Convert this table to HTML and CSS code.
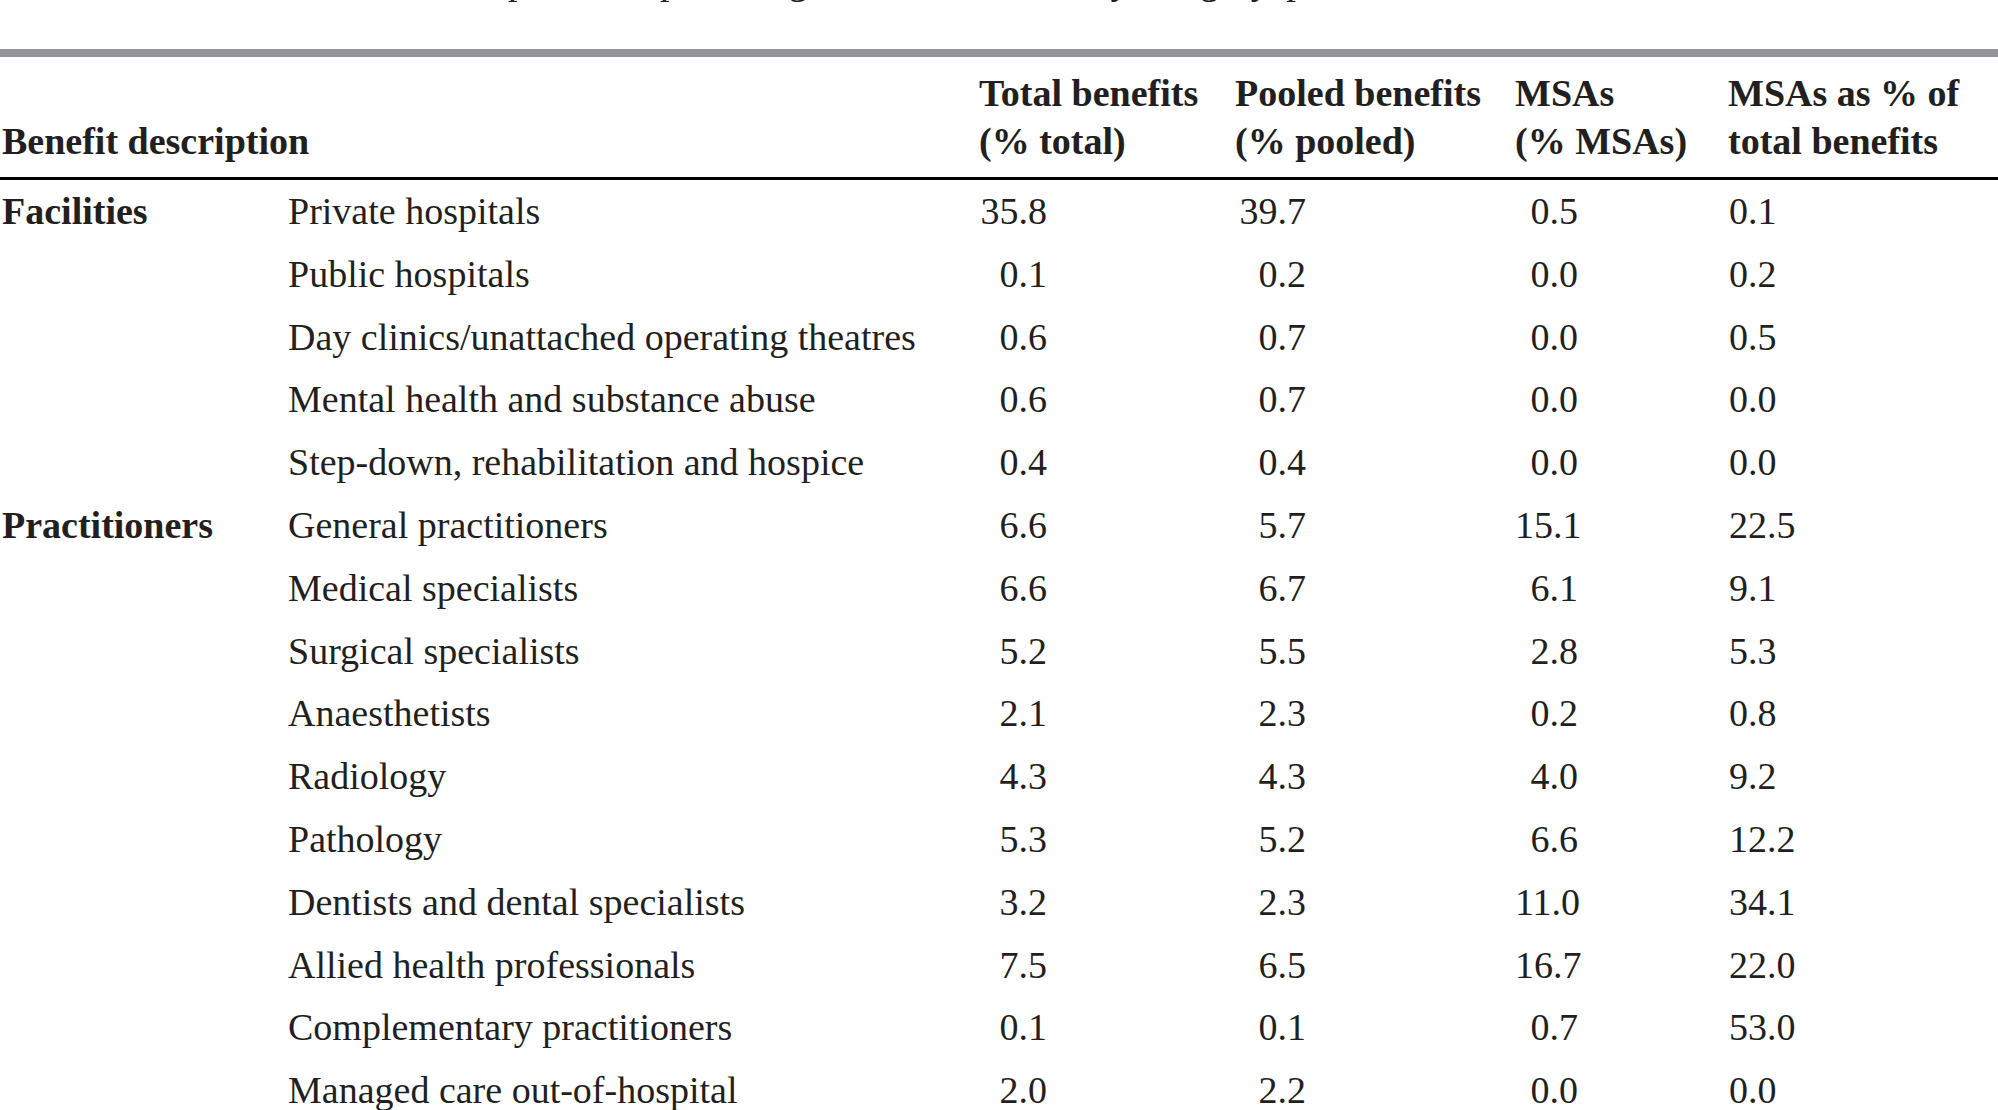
FILE: index.html
```html
<!DOCTYPE html>
<html lang="en">
<head>
<meta charset="utf-8">
<title>Benefit description table</title>
<link rel="stylesheet" href="styles.css">
</head>
<body>
<div class="caption">Table 3 Benefits paid, as a percentage of total benefits, by category, private medical schemes, 2008</div>
<div class="rule"></div>
<table class="bt">
  <colgroup>
    <col class="c1"><col class="c2"><col class="c3"><col class="c4"><col class="c5"><col class="c6">
  </colgroup>
  <thead>
    <tr>
      <th colspan="2" class="hd first">Benefit description</th>
      <th class="hd">Total benefits<br>(% total)</th>
      <th class="hd">Pooled benefits<br>(% pooled)</th>
      <th class="hd">MSAs<br>(% MSAs)</th>
      <th class="hd">MSAs as % of<br>total benefits</th>
    </tr>
  </thead>
  <tbody>
    <tr><td class="grp">Facilities</td><td class="desc">Private hospitals</td><td class="n3">35.8</td><td class="n4">39.7</td><td class="n5">0.5</td><td class="n6">0.1</td></tr>
    <tr><td class="grp"></td><td class="desc">Public hospitals</td><td class="n3">0.1</td><td class="n4">0.2</td><td class="n5">0.0</td><td class="n6">0.2</td></tr>
    <tr><td class="grp"></td><td class="desc">Day clinics/unattached operating theatres</td><td class="n3">0.6</td><td class="n4">0.7</td><td class="n5">0.0</td><td class="n6">0.5</td></tr>
    <tr><td class="grp"></td><td class="desc">Mental health and substance abuse</td><td class="n3">0.6</td><td class="n4">0.7</td><td class="n5">0.0</td><td class="n6">0.0</td></tr>
    <tr><td class="grp"></td><td class="desc">Step-down, rehabilitation and hospice</td><td class="n3">0.4</td><td class="n4">0.4</td><td class="n5">0.0</td><td class="n6">0.0</td></tr>
    <tr><td class="grp">Practitioners</td><td class="desc">General practitioners</td><td class="n3">6.6</td><td class="n4">5.7</td><td class="n5">15.1</td><td class="n6">22.5</td></tr>
    <tr><td class="grp"></td><td class="desc">Medical specialists</td><td class="n3">6.6</td><td class="n4">6.7</td><td class="n5">6.1</td><td class="n6">9.1</td></tr>
    <tr><td class="grp"></td><td class="desc">Surgical specialists</td><td class="n3">5.2</td><td class="n4">5.5</td><td class="n5">2.8</td><td class="n6">5.3</td></tr>
    <tr><td class="grp"></td><td class="desc">Anaesthetists</td><td class="n3">2.1</td><td class="n4">2.3</td><td class="n5">0.2</td><td class="n6">0.8</td></tr>
    <tr><td class="grp"></td><td class="desc">Radiology</td><td class="n3">4.3</td><td class="n4">4.3</td><td class="n5">4.0</td><td class="n6">9.2</td></tr>
    <tr><td class="grp"></td><td class="desc">Pathology</td><td class="n3">5.3</td><td class="n4">5.2</td><td class="n5">6.6</td><td class="n6">12.2</td></tr>
    <tr><td class="grp"></td><td class="desc">Dentists and dental specialists</td><td class="n3">3.2</td><td class="n4">2.3</td><td class="n5">11.0</td><td class="n6">34.1</td></tr>
    <tr><td class="grp"></td><td class="desc">Allied health professionals</td><td class="n3">7.5</td><td class="n4">6.5</td><td class="n5">16.7</td><td class="n6">22.0</td></tr>
    <tr><td class="grp"></td><td class="desc">Complementary practitioners</td><td class="n3">0.1</td><td class="n4">0.1</td><td class="n5">0.7</td><td class="n6">53.0</td></tr>
    <tr><td class="grp"></td><td class="desc">Managed care out-of-hospital</td><td class="n3">2.0</td><td class="n4">2.2</td><td class="n5">0.0</td><td class="n6">0.0</td></tr>
  </tbody>
</table>
</body>
</html>
```

FILE: styles.css
```css
html, body {
  margin: 0;
  padding: 0;
  background: #ffffff;
}

body {
  font-family: "Liberation Serif", "Times New Roman", serif;
  font-size: 38px;
  color: #231f20;
  overflow: hidden;
}

.caption {
  margin-top: -38px;
  height: 38px;
  line-height: 38px;
  padding-left: 250px;
  white-space: nowrap;
}

.rule {
  margin-top: 49px;
  height: 8px;
  background: #939598;
}

.bt {
  width: 1998px;
  border-collapse: collapse;
  table-layout: fixed;
}

.c1 { width: 288px; }
.c2 { width: 691px; }
.c3 { width: 256px; }
.c4 { width: 280px; }
.c5 { width: 213px; }
.c6 { width: 270px; }

.hd {
  font-weight: bold;
  text-align: left;
  vertical-align: bottom;
  line-height: 48px;
  padding: 12px 0 12px 0;
  border-bottom: 3px solid #000000;
  white-space: nowrap;
}

.hd.first {
  padding-left: 2px;
}

td {
  padding: 0;
  line-height: 62.8px;
  white-space: nowrap;
  vertical-align: top;
}

.grp {
  font-weight: bold;
  padding-left: 2px;
}

.n3 { text-align: right; padding-right: 188px; }
.n4 { text-align: right; padding-right: 209px; }
.n5 { text-align: right; padding-right: 150px; }
.n6 { text-align: left; padding-left: 1px; }
```
